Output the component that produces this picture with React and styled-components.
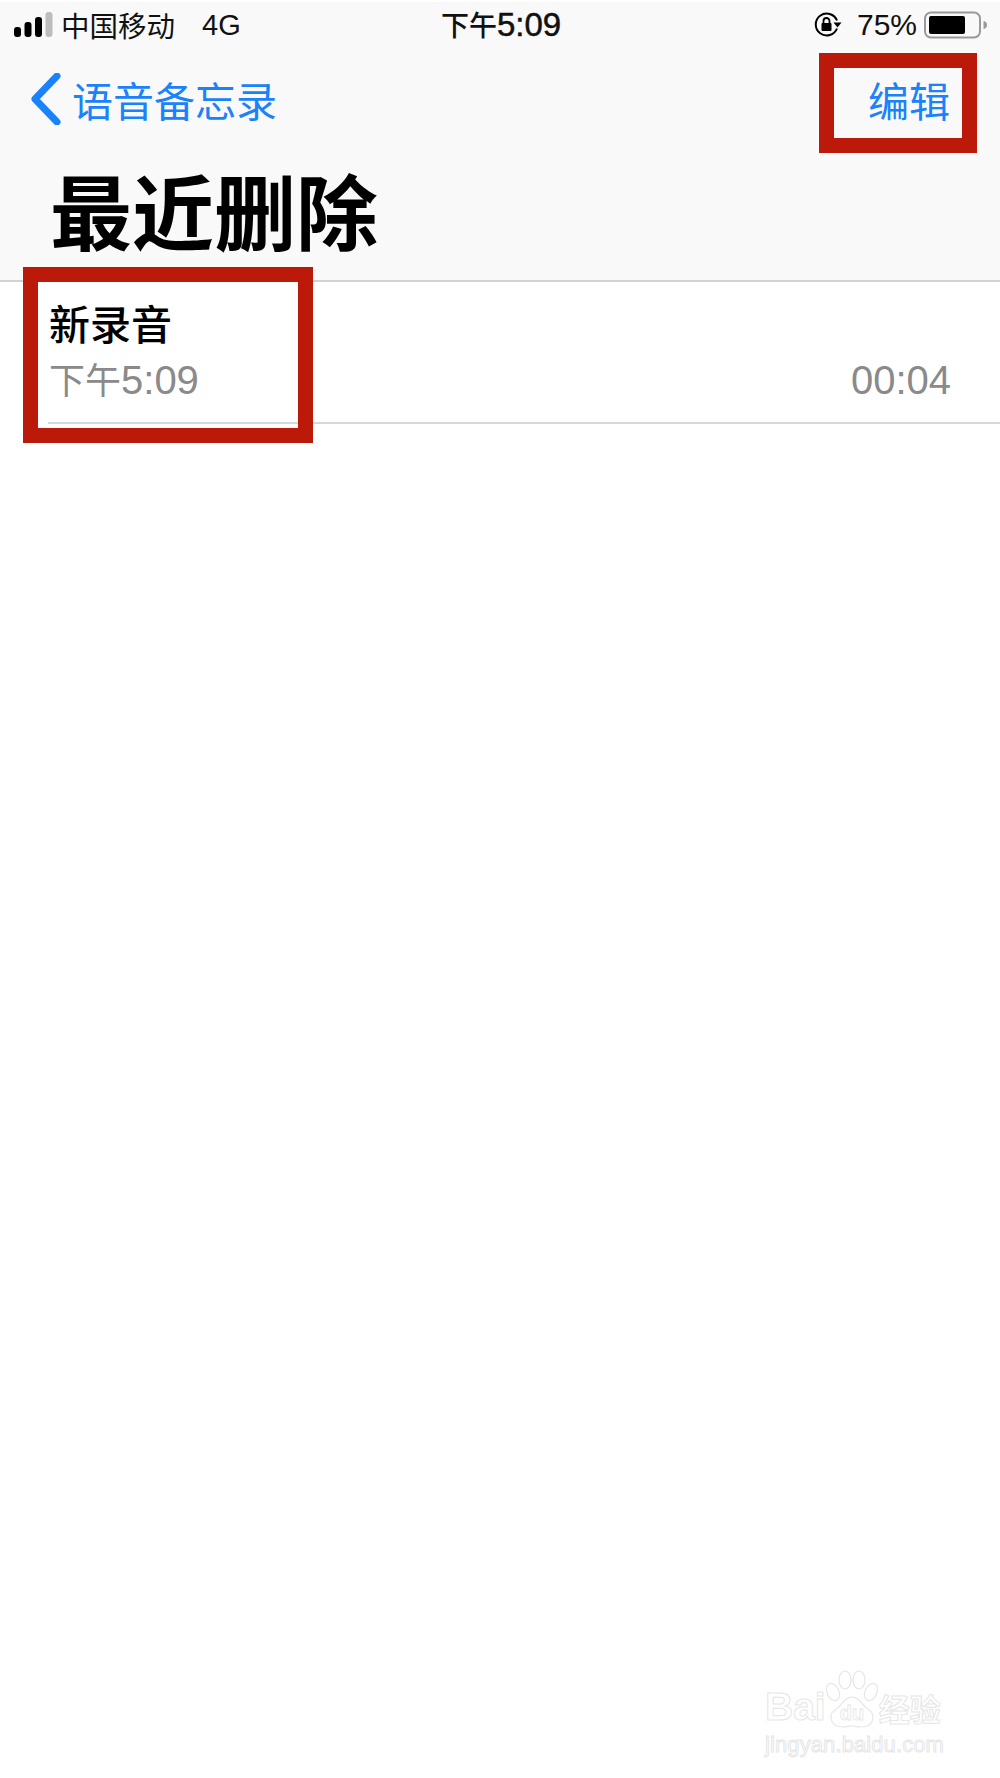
import React from "react";
import styled, { createGlobalStyle } from "styled-components";

const GlobalStyle = createGlobalStyle`
  html, body {
    margin: 0;
    padding: 0;
    background: #ffffff;
  }
  * {
    box-sizing: border-box;
  }
`;

const FONT = `"Liberation Sans", "Noto Sans CJK SC", sans-serif`;
const CJK = `"Noto Sans CJK SC", "Liberation Sans", sans-serif`;

const Page = styled.div`
  position: relative;
  width: 1000px;
  height: 1778px;
  padding-top: 2px;
  background: #fff;
  font-family: ${FONT};
  overflow: hidden;
`;

const Header = styled.header`
  height: 280px;
  background: #f9f9f9;
  border-bottom: 2px solid #d2d2d2;
`;

const StatusBar = styled.div`
  display: grid;
  grid-template-columns: 1fr auto 1fr;
  align-items: center;
  height: 44px;
  padding: 0 12px 0 14px;
  color: #111;
  font-size: 29px;
`;

const StatusLeft = styled.div`
  display: flex;
  align-items: center;
`;

const Carrier = styled.span`
  margin-left: 7px;
  font-family: ${CJK};
  font-size: 28.5px;
  line-height: 44px;
`;

const Network = styled.span`
  margin-left: 27px;
  line-height: 44px;
`;

const Clock = styled.div`
  font-size: 33px;
  line-height: 44px;
  -webkit-text-stroke: 0.5px #111;
`;

const ClockHan = styled.span`
  font-family: ${CJK};
  font-size: 28px;
  font-weight: 500;
  -webkit-text-stroke: 0;
`;

const StatusRight = styled.div`
  display: flex;
  align-items: center;
  justify-content: flex-end;
`;

const Percent = styled.span`
  margin: 0 7px 0 15px;
  font-size: 30px;
  line-height: 44px;
`;

const NavBar = styled.nav`
  display: flex;
  align-items: center;
  justify-content: space-between;
  height: 76px;
  margin-top: 15px;
  padding: 0 50px 0 31px;
`;

const NavLink = styled.a`
  display: flex;
  align-items: center;
  color: #1a82fb;
  font-family: ${CJK};
  font-size: 41px;
  line-height: 76px;
`;

const BackLabel = styled.span`
  margin-left: 11px;
`;

const Title = styled.h1`
  margin: 22px 0 0 50px;
  color: #000;
  font-family: ${CJK};
  font-size: 82px;
  font-weight: 700;
  line-height: 100px;
`;

const Row = styled.div`
  display: flex;
  justify-content: space-between;
  align-items: flex-end;
  height: 142px;
  margin-left: 48px;
  padding: 0 49px 0 1px;
  border-bottom: 2px solid #d8d8d8;
`;

const RowText = styled.div`
  display: flex;
  flex-direction: column;
`;

const RowTitle = styled.div`
  margin-bottom: 5px;
  color: #000;
  font-family: ${CJK};
  font-size: 41px;
  font-weight: 500;
  line-height: 54px;
`;

const RowTime = styled.div`
  margin-bottom: 18px;
  color: #8a8a8a;
  font-size: 40px;
  line-height: 48px;
`;

const TimeHan = styled.span`
  font-family: ${CJK};
  font-size: 36px;
`;

// red annotation boxes painted over the screenshot
const Callout = styled.div`
  position: absolute;
  top: ${(p) => p.$top}px;
  left: ${(p) => p.$left}px;
  width: ${(p) => p.$width}px;
  height: ${(p) => p.$height}px;
  border: 15px solid #bb1a0a;
`;

const Watermark = styled.div`
  position: absolute;
  right: 55px;
  bottom: 20px;
  width: 180px;
  color: #fff;
  -webkit-text-stroke: 1px #e6e6e6;
`;

const WmRow = styled.div`
  display: flex;
  align-items: flex-end;
  height: 60px;
  font-size: 39px;
  font-weight: 700;
  line-height: 40px;
`;

const WmPaw = styled.svg`
  flex: none;
  margin: 0 0 -5px -1px;
  fill: #fff;
  stroke: #e6e6e6;
  stroke-width: 1.2;
`;

const WmCn = styled.span`
  margin-left: 0;
  font-family: ${CJK};
  font-size: 31px;
  line-height: 38px;
`;

const WmUrl = styled.div`
  margin-top: 5px;
  font-size: 22px;
  letter-spacing: 0.1px;
  line-height: 26px;
`;

const SignalIcon = () => (
  <svg width="40" height="26" viewBox="0 0 40 26">
    <rect x="0" y="15" width="7" height="10" rx="3" fill="#000" />
    <rect x="10.5" y="10" width="7" height="15" rx="3" fill="#000" />
    <rect x="21" y="5" width="7" height="20" rx="3" fill="#000" />
    <rect x="31.5" y="0" width="7" height="25" rx="3" fill="#bdbdbd" />
  </svg>
);

const LockRotationIcon = () => (
  <svg width="28" height="26" viewBox="0 0 28 26" fill="none">
    <path d="M23 16.5A11 11 0 1 1 23 8.5" stroke="#000" strokeWidth="2" />
    <path d="M19.5 10.5h8l-4 5z" fill="#000" />
    <rect x="7.5" y="11" width="10" height="8" rx="1" fill="#000" />
    <path d="M9.5 11V9a3 3 0 0 1 6 0v2" stroke="#000" strokeWidth="1.8" />
  </svg>
);

const BatteryIcon = () => (
  <svg width="64" height="28" viewBox="0 0 64 28" fill="none">
    <rect x="1" y="1.5" width="55" height="25" rx="6" stroke="#9a9a9a" strokeWidth="2" />
    <rect x="5" y="5" width="36" height="18" rx="2" fill="#000" />
    <path d="M59.5 10c2.5 .6 3.5 2 3.5 4s-1 3.4-3.5 4z" fill="#9a9a9a" />
  </svg>
);

const BackIcon = () => (
  <svg width="30" height="52" viewBox="0 0 30 52" fill="none">
    <path
      d="M26 3L4 26l22 23"
      stroke="#1a82fb"
      strokeWidth="7"
      strokeLinecap="round"
      strokeLinejoin="round"
    />
  </svg>
);

const PawIcon = () => (
  <WmPaw width="54" height="62" viewBox="0 0 54 62">
    <ellipse cx="8" cy="22" rx="6" ry="9" transform="rotate(-25 8 22)" />
    <ellipse cx="20" cy="10" rx="6" ry="9" />
    <ellipse cx="34" cy="10" rx="6" ry="9" />
    <ellipse cx="46" cy="22" rx="6" ry="9" transform="rotate(25 46 22)" />
    <path d="M27 27c8 0 10 9 17 13 7 5 5 17-8 17-4 0-6-1-9-1s-5 1-9 1C5 57 3 45 10 40c7-4 9-13 17-13z" />
    <text
      x="27"
      y="50"
      textAnchor="middle"
      fontFamily="Liberation Sans, sans-serif"
      fontSize="20"
      strokeWidth="0.8"
    >
      du
    </text>
  </WmPaw>
);

const App = () => {
  return (
    <>
      <GlobalStyle />
      <Page>
        <Header>
          <StatusBar>
            <StatusLeft>
              <SignalIcon />
              <Carrier>中国移动</Carrier>
              <Network>4G</Network>
            </StatusLeft>
            <Clock>
              <ClockHan>下午</ClockHan>5:09
            </Clock>
            <StatusRight>
              <LockRotationIcon />
              <Percent>75%</Percent>
              <BatteryIcon />
            </StatusRight>
          </StatusBar>
          <NavBar>
            <NavLink>
              <BackIcon />
              <BackLabel>语音备忘录</BackLabel>
            </NavLink>
            <NavLink>编辑</NavLink>
          </NavBar>
          <Title>最近删除</Title>
        </Header>
        <Row>
          <RowText>
            <RowTitle>新录音</RowTitle>
            <RowTime>
              <TimeHan>下午</TimeHan>5:09
            </RowTime>
          </RowText>
          <RowTime>00:04</RowTime>
        </Row>
        <Callout $top={53} $left={819} $width={158} $height={100} />
        <Callout $top={267} $left={23} $width={290} $height={176} />
        <Watermark>
          <WmRow>
            Bai
            <PawIcon />
            <WmCn>经验</WmCn>
          </WmRow>
          <WmUrl>jingyan.baidu.com</WmUrl>
        </Watermark>
      </Page>
    </>
  );
};

export default App;
